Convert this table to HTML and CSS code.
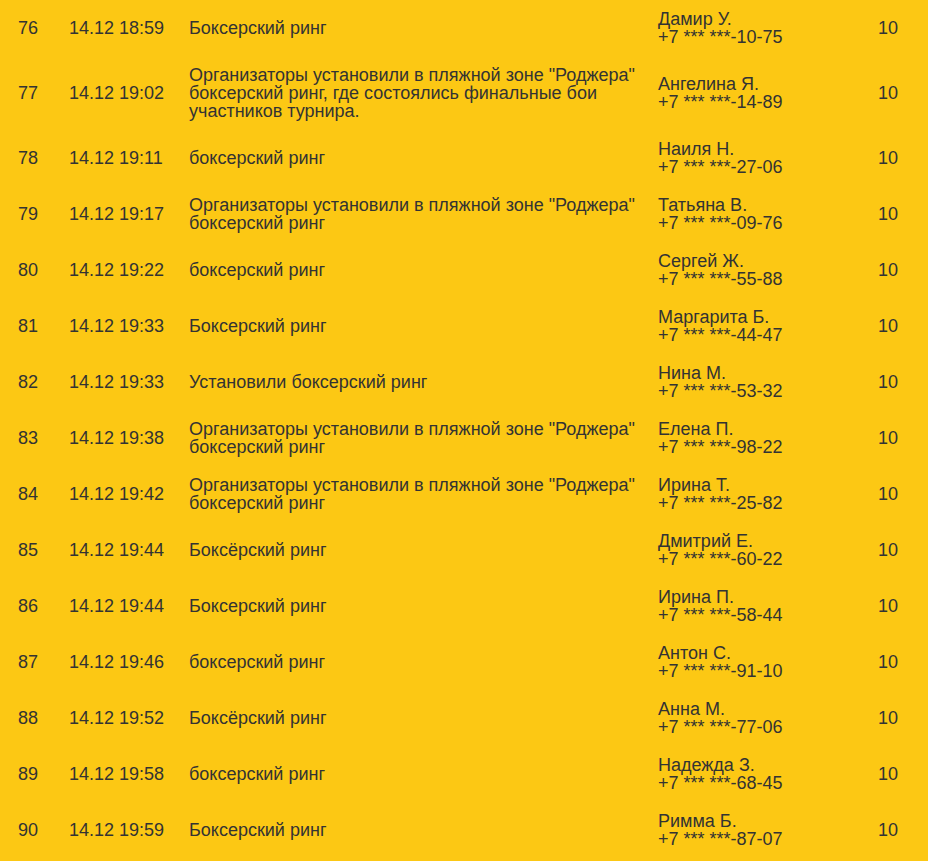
FILE: index.html
```html
<!DOCTYPE html>
<html lang="ru">
<head>
    <meta charset="UTF-8">
    <meta name="viewport" content="width=device-width, initial-scale=1.0">
    <title>Результаты голосования</title>
    <link rel="stylesheet" href="styles.css">
</head>
<body>

    <table class="results">
        <colgroup>
            <col class="col-num">
            <col class="col-date">
            <col class="col-text">
            <col class="col-user">
            <col class="col-score">
        </colgroup>
        <tbody>
            <tr>
                <td>76</td><td>14.12 18:59</td><td>Боксерский ринг</td>
                <td>Дамир У.<br>+7 *** ***-10-75</td><td class="score">10</td>
            </tr>
            <tr>
                <td>77</td><td>14.12 19:02</td><td>Организаторы установили в пляжной зоне "Роджера" боксерский ринг, где состоялись финальные бои участников турнира.</td>
                <td>Ангелина Я.<br>+7 *** ***-14-89</td><td class="score">10</td>
            </tr>
            <tr>
                <td>78</td><td>14.12 19:11</td><td>боксерский ринг</td>
                <td>Наиля Н.<br>+7 *** ***-27-06</td><td class="score">10</td>
            </tr>
            <tr>
                <td>79</td><td>14.12 19:17</td><td>Организаторы установили в пляжной зоне "Роджера" боксерский ринг</td>
                <td>Татьяна В.<br>+7 *** ***-09-76</td><td class="score">10</td>
            </tr>
            <tr>
                <td>80</td><td>14.12 19:22</td><td>боксерский ринг</td>
                <td>Сергей Ж.<br>+7 *** ***-55-88</td><td class="score">10</td>
            </tr>
            <tr>
                <td>81</td><td>14.12 19:33</td><td>Боксерский ринг</td>
                <td>Маргарита Б.<br>+7 *** ***-44-47</td><td class="score">10</td>
            </tr>
            <tr>
                <td>82</td><td>14.12 19:33</td><td>Установили боксерский ринг</td>
                <td>Нина М.<br>+7 *** ***-53-32</td><td class="score">10</td>
            </tr>
            <tr>
                <td>83</td><td>14.12 19:38</td><td>Организаторы установили в пляжной зоне "Роджера" боксерский ринг</td>
                <td>Елена П.<br>+7 *** ***-98-22</td><td class="score">10</td>
            </tr>
            <tr>
                <td>84</td><td>14.12 19:42</td><td>Организаторы установили в пляжной зоне "Роджера" боксерский ринг</td>
                <td>Ирина Т.<br>+7 *** ***-25-82</td><td class="score">10</td>
            </tr>
            <tr>
                <td>85</td><td>14.12 19:44</td><td>Боксёрский ринг</td>
                <td>Дмитрий Е.<br>+7 *** ***-60-22</td><td class="score">10</td>
            </tr>
            <tr>
                <td>86</td><td>14.12 19:44</td><td>Боксерский ринг</td>
                <td>Ирина П.<br>+7 *** ***-58-44</td><td class="score">10</td>
            </tr>
            <tr>
                <td>87</td><td>14.12 19:46</td><td>боксерский ринг</td>
                <td>Антон С.<br>+7 *** ***-91-10</td><td class="score">10</td>
            </tr>
            <tr>
                <td>88</td><td>14.12 19:52</td><td>Боксёрский ринг</td>
                <td>Анна М.<br>+7 *** ***-77-06</td><td class="score">10</td>
            </tr>
            <tr>
                <td>89</td><td>14.12 19:58</td><td>боксерский ринг</td>
                <td>Надежда З.<br>+7 *** ***-68-45</td><td class="score">10</td>
            </tr>
            <tr>
                <td>90</td><td>14.12 19:59</td><td>Боксерский ринг</td>
                <td>Римма Б.<br>+7 *** ***-87-07</td><td class="score">10</td>
            </tr>
        </tbody>
    </table>

</body>
</html>
```

FILE: styles.css
```css
/* Base styles */
* {
    margin: 0;
    padding: 0;
    box-sizing: border-box;
}

body {
    margin: 0 8px;
    background-color: #fcc814;
    color: #333333;
    font-family: 'Liberation Sans', Arial, sans-serif;
    font-size: 18px;
    line-height: 18px;
}

/* Results table */
.results {
    width: 912px;
    border-collapse: collapse;
    table-layout: fixed;
}

.results td {
    padding: 10px;
    vertical-align: middle;
    text-align: left;
}

.col-num { width: 51px; }
.col-date { width: 120px; }
.col-text { width: 469px; }
.col-user { width: 208px; }
.col-score { width: 64px; }

.results td.score {
    text-align: center;
}
```
